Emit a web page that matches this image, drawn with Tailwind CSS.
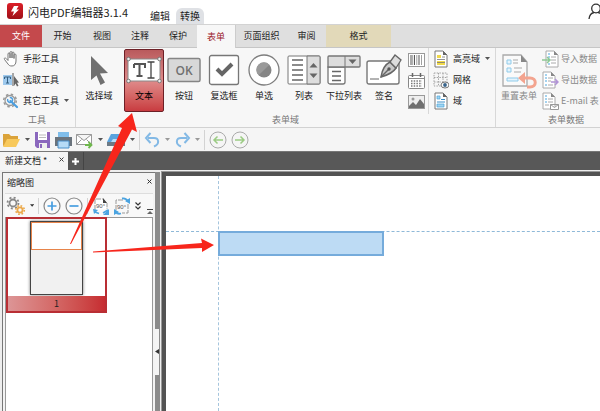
<!DOCTYPE html>
<html lang="zh-CN">
<head>
<meta charset="utf-8">
<title>闪电PDF编辑器3.1.4</title>
<script src="https://cdn.jsdelivr.net/npm/@tailwindcss/browser@4"></script>
</head>
<body class="relative flex min-h-screen flex-col overflow-hidden bg-white font-['Noto_Sans_CJK_SC',sans-serif] text-[9px] leading-3 text-[#222]">

<header class="flex h-6 items-start overflow-hidden">
  <svg class="mt-[3px] ml-[7px] h-4 w-4 shrink-0" viewBox="0 0 16 16"><defs><linearGradient id="logo" x1="0" y1="0" x2="0" y2="1"><stop offset="0" stop-color="#dc1f28"/><stop offset="1" stop-color="#9e1018"/></linearGradient></defs><rect width="16" height="16" rx="3" fill="url(#logo)"/><path d="M7 3h4.500L9.500 6.500H12L5.500 13l1.500-4.500H4z" fill="#fff"/></svg>
  <h1 class="mt-1 ml-[5px] text-[11px] leading-4 whitespace-nowrap">闪电PDF编辑器3.1.4</h1>
  <nav class="mt-2 ml-4 flex h-4 text-[10px] leading-4">
    <button class="h-4 w-8 pl-[-2px]">编辑</button>
    <button class="h-4 w-7 rounded-t-md bg-[#dfe1e5]">转换</button>
  </nav>
  <button aria-label="账户" class="mt-[3px] -mr-1 ml-auto"><svg class="h-4 w-4" viewBox="0 0 16 16" fill="none" stroke="#333" stroke-width="1.300"><circle cx="8" cy="5.500" r="4.300"/><path d="M1 16c.5-4 2.500-6 5-6.500M15 16c-.5-4-2.500-6-5-6.500"/></svg></button>
</header>

<nav class="flex h-6 shrink-0 border-t border-b border-t-[#d3d3d3] border-b-[#c6c6c6] bg-[#dfdfdf] whitespace-nowrap">
  <button class="w-[42px] bg-[#c4494c] text-white">文件</button>
  <button class="w-[41px]">开始</button>
  <button class="w-[38px]">视图</button>
  <button class="w-[38px]">注释</button>
  <button class="w-[38px]">保护</button>
  <button class="-mb-px w-[39px] border-r border-[#ccc] bg-[#f7f7f7] text-[#9a2029]">表单</button>
  <button class="w-[51px]">页面组织</button>
  <button class="w-[39px]">审阅</button>
  <button class="w-[65px] bg-[#e2d9b9]">格式</button>
</nav>

<section class="flex h-20 shrink-0 overflow-hidden border-b border-[#d2d2d2] bg-[#f7f7f7] whitespace-nowrap">
  <div class="flex w-[76px] shrink-0 flex-col border-r border-[#d8d8d8] pl-[3px]">
    <button class="flex h-[21px] items-center gap-1"><svg class="h-4 w-4" viewBox="0 0 16 16" fill="#fff" stroke="#777"><path d="M5 13 1.500 8.500c-1-1.500 1-2 2-.7L5 9.500V3c0-1.500 2-1.500 2 0v4V1.500c0-1.300 2-1.300 2 0V7 2c0-1.300 2-1.300 2 0v5.500V4c0-1.300 2-1.300 2 0v6c0 3-1.500 5-4 5s-3-.7-4-2z"/></svg>手形工具</button>
    <button class="flex h-[21px] items-center gap-1"><svg class="h-4 w-4" viewBox="0 0 16 16"><rect y="3" width="9" height="10" fill="#9ec9ed"/><path d="M1.500 5h6v2M4.500 5v6M3 11h3M1.500 5v2" stroke="#376081" fill="none"/><path d="M10 1v13" stroke="#555"/><path d="m11 4 5 6.500-2 .2 1.500 3-1.500.8-1.500-3L11 14z" fill="#666"/></svg>选取工具</button>
    <button class="flex h-[21px] items-center gap-1"><svg class="h-4 w-4" viewBox="0 0 16 16" fill="none"><circle cx="7" cy="7.500" r="5" stroke="#999" stroke-width="1.300"/><circle cx="7" cy="7.500" r="6.300" stroke="#999" stroke-width="1.500" stroke-dasharray="2.500 2.450"/><path d="m7.500 8 6.500 6" stroke="#4c9fe0" stroke-width="2.200" stroke-linecap="round"/><path d="M4.800 6a2.500 2.500 0 1 0 2-1.500" stroke="#4c9fe0" stroke-width="1.500"/></svg>其它工具<svg class="ml-px h-[3px] w-[5px]" viewBox="0 0 5 3"><path d="M0 0h5L2.500 3z" fill="#555"/></svg></button>
    <span class="mt-[3px] pr-1 text-center text-[#777]">工具</span>
  </div>

  <div class="flex w-[420px] shrink-0 flex-col border-r border-[#d8d8d8]">
    <div class="flex h-[66px] pl-[3px]">
      <button class="mr-[5px] flex h-16 w-10 flex-col items-center gap-1 pt-[6px]"><svg class="h-8 w-8" viewBox="0 0 32 32"><path d="m8 2 17 17-8 .5 5 9-4.500 2.500-4-9.500L8 26z" fill="#707070"/></svg>选择域</button>
      <button class="mt-px flex h-[63px] w-10 flex-col items-center gap-1 rounded-xs border border-[#6d2027] bg-linear-to-b from-[#b95a5d] via-[#df8b8b] to-[#c83b40] pt-1 text-black"><svg class="h-8 w-9" viewBox="0 0 36 32"><rect x="2" y="5" width="32" height="22" fill="#fff" stroke="#888"/><g fill="#eee" stroke="#777"><circle cx="2.500" cy="5" r="1.800"/><circle cx="33.500" cy="5" r="1.800"/><circle cx="2.500" cy="27" r="1.800"/><circle cx="33.500" cy="27" r="1.800"/></g><path d="M8 10h11v4M8 14v-4M13.500 10v12M10.500 22h6" fill="none" stroke="#555" stroke-width="2"/><path d="M21.500 8h7M25 8v16M21.500 24h7" stroke="#444" stroke-width="1.300"/></svg>文本</button>
      <button class="flex h-16 w-10 flex-col items-center gap-1 pt-[6px]"><svg class="h-8 w-[34px]" viewBox="0 0 34 32"><rect x="1" y="4.500" width="32" height="23" rx="1.500" fill="#d8d8d8" stroke="#858585" stroke-width="1.500"/><text x="17" y="20.500" text-anchor="middle" font-family="Open Sans, sans-serif" font-size="12" font-weight="600" fill="#707070">OK</text></svg>按钮</button>
      <button class="flex h-16 w-10 flex-col items-center gap-1 pt-[6px]"><svg class="h-8 w-8" viewBox="0 0 32 32"><rect x="1.500" y="1.500" width="29" height="29" rx="2" fill="#fff" stroke="#777" stroke-width="1.300"/><path d="m9 15 5 5 10-10" fill="none" stroke="#666" stroke-width="4"/></svg>复选框</button>
      <button class="flex h-16 w-10 flex-col items-center gap-1 pt-[6px]"><svg class="h-8 w-8" viewBox="0 0 32 32"><circle cx="16" cy="16" r="15" fill="#fff" stroke="#7d7d7d" stroke-width="1.300"/><circle cx="16" cy="16" r="7.500" fill="#858585"/><path d="M10.700 21.300A7.500 7.500 0 1 1 21.300 10.700z" fill="#9a9a9a"/></svg>单选</button>
      <button class="flex h-16 w-10 flex-col items-center gap-1 pt-[6px]"><svg class="h-8 w-[34px]" viewBox="0 0 34 32"><rect x="1" y="2" width="32" height="28" rx="1" fill="#fff" stroke="#777"/><path d="M20 2h12a1 1 0 0 1 1 1v26a1 1 0 0 1-1 1H20z" fill="#ddd" stroke="#777"/><path d="M5 6h11M5 11h11M5 16h11M5 21h11M5 26h11" stroke="#666" stroke-width="1.300"/><path d="m26.500 9 4 4.500h-8zM26.500 24l4-4.500h-8z" fill="#666"/></svg>列表</button>
      <button class="flex h-16 w-10 flex-col items-center gap-1 pt-[6px]"><svg class="h-8 w-[34px]" viewBox="0 0 34 32"><path d="M1 13h17v15a2 2 0 0 1-2 2H3a2 2 0 0 1-2-2z" fill="#fff" stroke="#777" stroke-width="1.300"/><path d="M1 13V3a1 1 0 0 1 1-1h30a1 1 0 0 1 1 1v9a1 1 0 0 1-1 1z" fill="#ddd" stroke="#777" stroke-width="1.300"/><path d="M18 2v11" stroke="#777"/><path d="M21.500 5.500h8l-4 4.500z" fill="#666"/><path d="M5 17.500h9M5 22h9M5 26.500h9" stroke="#666" stroke-width="1.300"/></svg>下拉列表</button>
      <button class="flex h-16 w-10 flex-col items-center gap-1 pt-[6px]"><svg class="h-8 w-9" viewBox="0 0 36 32"><rect x="1" y="7" width="32" height="23" rx="2" fill="#fff" stroke="#777" stroke-width="1.400"/><path d="M4 25h9" stroke="#666"/><path d="M15 23c1-7 3-12 9-15l6 6c-3 5-8 7-15 9z" fill="#c9c9c9" stroke="#666" stroke-width="1.500"/><path d="m24 8 5-7 6 5-5 8z" fill="#ddd" stroke="#666" stroke-width="1.300"/><path d="m15 23 8-8" stroke="#666" stroke-width="1.500"/><circle cx="23" cy="15" r="1.700" fill="#555"/></svg>签名</button>
      <div class="flex w-[25px] flex-col items-center gap-[5px] border-r border-[#d8d8d8] pt-1">
        <button aria-label="条形码"><svg class="h-4 w-[17px]" viewBox="0 0 17 16"><rect x=".5" y="1.500" width="16" height="13" fill="#fff" stroke="#999"/><path d="M3 3v10M6.500 3v10M11 3v10" stroke="#555"/><path d="M8.800 3v10M13.500 3v10M4.700 3v10" stroke="#777" stroke-width=".7"/></svg></button>
        <button aria-label="日期"><svg class="h-4 w-[17px]" viewBox="0 0 17 16"><rect x=".5" y="2.500" width="16" height="13" rx="1" fill="#fff" stroke="#888"/><path d="M1 5.500h15" stroke="#888"/><path d="M4.500 0v4M12.500 0v4" stroke="#666" stroke-width="1.500"/><path d="M3 8h11M3 10.500h11M3 13h11" stroke="#777" stroke-dasharray="1.500 1.200" stroke-width="1.500"/></svg></button>
        <button aria-label="图像"><svg class="h-4 w-[17px]" viewBox="0 0 17 16"><rect x=".5" y="1.500" width="16" height="13" fill="#eee" stroke="#999"/><path d="M1 12l4-4 3 3 4-6 4 5v4H1z" fill="#707070"/><circle cx="5" cy="5" r="1.500" fill="#999"/></svg></button>
      </div>
      <div class="flex flex-col pl-1">
        <button class="flex h-[21px] items-center gap-1"><svg class="h-[18px] w-4" viewBox="0 0 16 18"><path d="M2 1h8l4 4v12H2z" fill="#fff" stroke="#777"/><path d="M10 1v4h4" fill="#666"/><path d="M4 5h4v3H4zM4 11h8v4H4z" fill="#f0d94b"/><path d="M9 7h3M4 9.500h8M4 12.500h8" stroke="#777" stroke-width=".8"/></svg>高亮域<svg class="ml-px h-[3px] w-[5px]" viewBox="0 0 5 3"><path d="M0 0h5L2.500 3z" fill="#555"/></svg></button>
        <button class="flex h-[21px] items-center gap-1"><svg class="h-[18px] w-4" viewBox="0 0 16 18"><path d="M1 2h13v13H1zM1 6.500h13M1 11h13M5.500 2v13M10 2v13" fill="none" stroke="#999" stroke-width=".9" stroke-dasharray="1.500 1.200"/><ellipse cx="12" cy="14" rx="4" ry="3" fill="#fff" stroke="#777"/><circle cx="12" cy="14" r="1.900" fill="#39648b"/></svg>网格</button>
        <button class="flex h-[21px] items-center gap-1"><svg class="h-[18px] w-4" viewBox="0 0 16 18"><path d="M2 1h8l4 4v12H2z" fill="#fff" stroke="#777"/><path d="M10 1v4h4" fill="#666"/><path d="M4 4h3v3H4zM4 12h7v3H4z" fill="#9fd4f2" stroke="#4aa3d8" stroke-width=".7"/><path d="M8 7.500h4M4 10h8" stroke="#3a8ec8"/></svg>域</button>
      </div>
    </div>
    <span class="text-center text-[#777]">表单域</span>
  </div>

  <div class="flex w-[140px] shrink-0 flex-col text-[#888]">
    <div class="flex h-[66px]">
      <button class="flex h-16 w-[46px] flex-col items-center pt-[6px]"><svg class="h-9 w-9" viewBox="0 0 36 36"><path d="M2 1h18l6 7v24H2z" fill="#fafafa" stroke="#aaa" stroke-width="1.300"/><path d="M20 1v7h6z" fill="#888"/><g fill="#e6f4fc" stroke="#8fcbea"><path d="M6 6h4v4H6zM6 14h4v4H6zM6 24h11v3H6z"/></g><path d="M12 6h5M12 9h5M13 14h8M13 18h7" stroke="#aaa"/><path d="M21 24h8c7 0 7 9 0 9h-3" fill="none" stroke="#f3a48f" stroke-width="3"/><path d="m24 18-7 6 7 6z" fill="#f3a48f"/></svg>重置表单</button>
      <div class="flex flex-col">
        <button class="flex h-[21px] items-center gap-[2px]"><svg class="h-[18px] w-[17px]" viewBox="0 0 17 18"><path d="M4 1h8l4 4v12H4z" fill="#fff" stroke="#aaa"/><path d="M12 1v4h4" fill="#888"/><path d="M6 4h2M6 7h2M6 14h2" stroke="#88c5ea" stroke-width="1.500"/><path d="M9 7h5M9 10h5M9 13h5" stroke="#aaa"/><path d="M0 10h7M5 7l3 3-3 3" fill="none" stroke="#8dc795" stroke-width="1.500"/></svg>导入数据</button>
        <button class="flex h-[21px] items-center gap-[2px]"><svg class="h-[18px] w-[17px]" viewBox="0 0 17 18"><path d="M1 1h8l4 4v12H1z" fill="#fff" stroke="#aaa"/><path d="M9 1v4h4" fill="#888"/><path d="M3 4h2M3 7h2M3 10h2M3 14h2" stroke="#88c5ea" stroke-width="1.500"/><path d="M6 7h5M6 10h3M6 14h5" stroke="#aaa"/><path d="M9 11h6M13 8l3 3-3 3" fill="none" stroke="#b194d6" stroke-width="1.500"/></svg>导出数据</button>
        <button class="flex h-[21px] items-center gap-[2px]"><svg class="h-[18px] w-[17px]" viewBox="0 0 17 18"><path d="M1 1h8l4 4v12H1z" fill="#fff" stroke="#aaa"/><path d="M9 1v4h4" fill="#888"/><path d="M3 4h2M3 7h2M3 10h2" stroke="#88c5ea" stroke-width="1.500"/><path d="M6 7h5M6 10h5M3 13h4" stroke="#aaa"/><path d="M8.500 12.500h8v5h-8zl4 3 4-3" fill="#fff" stroke="#999"/></svg>E-mail 表</button>
      </div>
    </div>
    <span class="text-center text-[#777]">表单数据</span>
  </div>
</section>

<div class="flex h-6 shrink-0 items-center border-b border-[#777] bg-[#f5f5f5] pl-[2px]">
  <button aria-label="打开"><svg class="h-[18px] w-[19px]" viewBox="0 0 19 18"><path d="M1 15V3h6l2 2h7v4" fill="#dba33a"/><path d="M1 16 5 8h13l-4 8z" fill="#f8c95c"/></svg></button>
  <svg class="ml-1 h-[3px] w-[5px]" viewBox="0 0 5 3"><path d="M0 0h5L2.500 3z" fill="#555"/></svg>
  <button aria-label="保存" class="ml-1"><svg class="h-[18px] w-[17px]" viewBox="0 0 17 18"><path d="M1 1h15v16H3l-2-2z" fill="#8a67bd"/><path d="M4 1h9v8H4z" fill="#fff"/><path d="M5 4h7M5 6.500h7" stroke="#bbb"/><path d="M5 12h8v5H5z" fill="#eee"/><path d="M6 13h2v4H6z" fill="#8a67bd"/></svg></button>
  <button aria-label="打印" class="ml-1"><svg class="h-[18px] w-[17px]" viewBox="0 0 17 18"><path d="M3 1h11v5H3z" fill="#7fbdea"/><path d="M0 6h17v9H0z" fill="#6a737c"/><path d="M3 10h11v7H3z" fill="#b6dbf6" stroke="#4a90ca"/></svg></button>
  <button aria-label="邮件" class="ml-1"><svg class="h-[18px] w-[17px]" viewBox="0 0 17 18"><path d="M.5 3.500h15v10H.5zl7.500 6 7.500-6M.5 13.500l5-5M15.500 13.500l-5-5" fill="#fff" stroke="#999"/><path d="M9 14h6M12.500 11l3 3-3 3" fill="none" stroke="#6fb84d" stroke-width="1.800"/></svg></button>
  <svg class="ml-[5px] h-[3px] w-[5px]" viewBox="0 0 5 3"><path d="M0 0h5L2.500 3z" fill="#555"/></svg>
  <button aria-label="扫描" class="ml-1"><svg class="h-[18px] w-[18px]" viewBox="0 0 18 18"><path d="M4 3h10l4 8H0z" fill="#5aa4df"/><path d="M6 8h7l2 3H4z" fill="#b9def8"/><path d="M0 11h18v4H0z" fill="#6c7a86"/></svg></button>
  <svg class="ml-[5px] h-[3px] w-[5px]" viewBox="0 0 5 3"><path d="M0 0h5L2.500 3z" fill="#555"/></svg>
  <span class="ml-1 h-5 w-px bg-[#d3d3d3]"></span>
  <button aria-label="撤销" class="ml-1"><svg class="h-[18px] w-[17px]" viewBox="0 0 17 18"><path d="M4 7h6c5 0 6 6 0 8.500M6.500 2 2 7l4.500 5" fill="none" stroke="#83b9e5" stroke-width="2"/></svg></button>
  <svg class="ml-1 h-[3px] w-[5px]" viewBox="0 0 5 3"><path d="M0 0h5L2.500 3z" fill="#999"/></svg>
  <button aria-label="重做" class="ml-1"><svg class="h-[18px] w-[17px]" viewBox="0 0 17 18"><path d="M13 7H7C2 7 1 13 7 15.500M10.500 2 15 7l-4.500 5" fill="none" stroke="#83b9e5" stroke-width="2"/></svg></button>
  <svg class="ml-1 h-[3px] w-[5px]" viewBox="0 0 5 3"><path d="M0 0h5L2.500 3z" fill="#999"/></svg>
  <span class="ml-1 h-5 w-px bg-[#d3d3d3]"></span>
  <button aria-label="后退" class="ml-1"><svg class="h-[18px] w-[18px]" viewBox="0 0 18 18" fill="none"><circle cx="9" cy="9" r="8" stroke="#aaa"/><path d="M14 9H5M8.500 5.500 5 9l3.500 3.500" stroke="#9bcb83" stroke-width="1.500"/></svg></button>
  <button aria-label="前进" class="ml-1"><svg class="h-[18px] w-[18px]" viewBox="0 0 18 18" fill="none"><circle cx="9" cy="9" r="8" stroke="#aaa"/><path d="M4 9h9M9.500 5.500 13 9l-3.500 3.500" stroke="#9bcb83" stroke-width="1.500"/></svg></button>
</div>

<div class="flex h-[18px] shrink-0 bg-[#585858]">
  <div class="flex w-[68px] items-center justify-between bg-[#f5f5f5] pr-1 pl-[5px]"><span class="whitespace-nowrap">新建文档 *</span><button aria-label="关闭文档"><svg class="mb-1 h-[5px] w-[5px]" viewBox="0 0 5 5"><path d="m.5.5 4 4m0-4-4 4" stroke="#444"/></svg></button></div>
  <button aria-label="新建" class="flex w-4 items-center justify-center border-r border-[#444]"><svg class="h-[7px] w-[7px]" viewBox="0 0 7 7"><path d="M3.500 0v7M0 3.500h7" stroke="#fff" stroke-width="2"/></svg></button>
</div>

<main class="flex flex-1 border-t-2 border-[#eee] bg-[#eee]">
  <aside class="ml-[2px] flex w-[153px] shrink-0 flex-col border-t border-l border-[#777] bg-[#f3f3f3]">
    <div class="flex h-5 shrink-0 items-center justify-between pr-[3px] pl-1"><h2>缩略图</h2><button aria-label="关闭面板"><svg class="mb-1 h-[5px] w-[5px]" viewBox="0 0 5 5"><path d="m.5.5 4 4m0-4-4 4" stroke="#333"/></svg></button></div>
    <div class="mx-[2px] flex h-6 shrink-0 items-center border-t border-[#ddd] bg-[#f8f8f8]">
      <button aria-label="选项" class="ml-px"><svg class="h-5 w-5" viewBox="0 0 20 20" fill="none"><circle cx="7" cy="7" r="3.500" stroke="#888" stroke-width="1.800"/><circle cx="7" cy="7" r="5.500" stroke="#888" stroke-width="1.800" stroke-dasharray="2 2.320"/><circle cx="14" cy="14" r="2.600" stroke="#eba94b" stroke-width="1.800"/><circle cx="14" cy="14" r="4.300" stroke="#eba94b" stroke-width="1.600" stroke-dasharray="1.700 1.680"/></svg></button>
      <svg class="ml-1 h-[3px] w-[5px]" viewBox="0 0 5 3"><path d="M0 0h5L2.500 3z" fill="#333"/></svg>
      <span class="ml-1 h-4 w-px bg-[#d3d3d3]"></span>
      <button aria-label="放大" class="ml-1"><svg class="h-[18px] w-[18px]" viewBox="0 0 18 18"><circle cx="9" cy="9" r="8" fill="#fafafa" stroke="#888" stroke-width="1.200"/><path d="M9 4.500v9M4.500 9h9" stroke="#469de0" stroke-width="1.700"/></svg></button>
      <button aria-label="缩小" class="ml-1"><svg class="h-[18px] w-[18px]" viewBox="0 0 18 18"><circle cx="9" cy="9" r="8" fill="#fafafa" stroke="#888" stroke-width="1.200"/><path d="M4.500 9h9" stroke="#469de0" stroke-width="1.700"/></svg></button>
      <span class="ml-1 h-4 w-px bg-[#d3d3d3]"></span>
      <button aria-label="顺时针旋转" class="ml-1"><svg class="h-[18px] w-[18px]" viewBox="0 0 18 18"><path d="M3 13V2h8l4 4v6" fill="#fff" stroke="#999" stroke-dasharray="5 1"/><path d="m11 1 4 5h-4z" fill="#444"/><text x="4" y="11" font-family="Liberation Sans" font-size="6" fill="#555">90°</text><path d="M1 12l5 1-4 4zM17 12v6h-6z" fill="#4aa3e0"/><path d="M3 15l4 1.500M11 16l5-3" stroke="#4aa3e0" stroke-width="1.500"/></svg></button>
      <button aria-label="逆时针旋转" class="ml-[3px]"><svg class="h-[18px] w-[18px]" viewBox="0 0 18 18"><path d="M3 13V3h7M15 7v9H9" fill="none" stroke="#999" stroke-dasharray="5 1"/><text x="4" y="11.500" font-family="Liberation Sans" font-size="6" fill="#555">90°</text><path d="M17 1v6l-5-3zM1 12l5 3-5 3z" fill="#4aa3e0"/><path d="M9 1.500c3-.5 5 1 6 3M3 15c1 2 3 2 5 1.500" fill="none" stroke="#4aa3e0" stroke-width="1.800"/></svg></button>
      <button aria-label="更多" class="ml-1"><svg class="h-2 w-[6px]" viewBox="0 0 6 8" fill="none" stroke="#333" stroke-width="1.200"><path d="m.5.5 2.500 2.500L5.500.5M.5 4.500 3 7l2.500-2.500"/></svg></button>
      <button aria-label="折叠" class="mt-3 ml-[6px]"><svg class="h-[5px] w-[6px]" viewBox="0 0 6 5"><path d="M0 .5h6" stroke="#444"/><path d="m3 2 3 3H0z" fill="#666"/></svg></button>
    </div>
    <div class="mx-[2px] flex-1 border border-b-0 border-[#999] bg-white">
      <button class="-mt-px flex w-[101px] flex-col border-2 border-[#b92e34]">
        <span class="flex h-[77px] w-full justify-center pt-[2px]"><span class="block h-[74px] w-[53px] border border-[#444] bg-[#f1f1f1] shadow-[0_0_3px_#777]"><span class="block h-[28px] border border-[#e7844a] bg-white"></span></span></span>
        <span class="block h-[15px] w-full bg-linear-to-r from-[#dc9596] to-[#c62b31] leading-[15px]">1</span>
      </button>
    </div>
  </aside>
  <div class="flex w-[5px] shrink-0 items-center bg-[#8b8b8b]"><button aria-label="收起侧栏" class="mt-[120px] flex h-[46px] w-1 items-center bg-[#f4f4f4]"><svg class="h-[5px] w-1" viewBox="0 0 4 5"><path d="M4 0v5L0 2.500z" fill="#333"/></svg></button></div>
  <section class="relative ml-[2px] flex-1 border-t-4 border-l-4 border-[#535353] bg-white outline outline-[#999]">
    <div class="absolute inset-y-0 left-[52px] border-l border-dashed border-[#a5c5dd]"></div>
    <div class="absolute inset-x-0 top-[55px] border-t border-dashed border-[#8fb9d8]"></div>
    <input aria-label="文本域" class="absolute top-[55px] left-[52px] h-[25px] w-[166px] border-2 border-[#75abdb] bg-[#bddbf4]">
  </section>
</main>

<svg class="pointer-events-none absolute top-0 left-0 h-[411px] w-[600px]" viewBox="0 0 600 411" fill="#f7261c"><path d="M70 244 122 128l-4-2 14-13 5 19-5-2.500L71 244z"/><path d="M93 251.500 202 243l-1-4.500 13 6.500-12 7v-4L93 252.500z"/></svg>
</body>
</html>
